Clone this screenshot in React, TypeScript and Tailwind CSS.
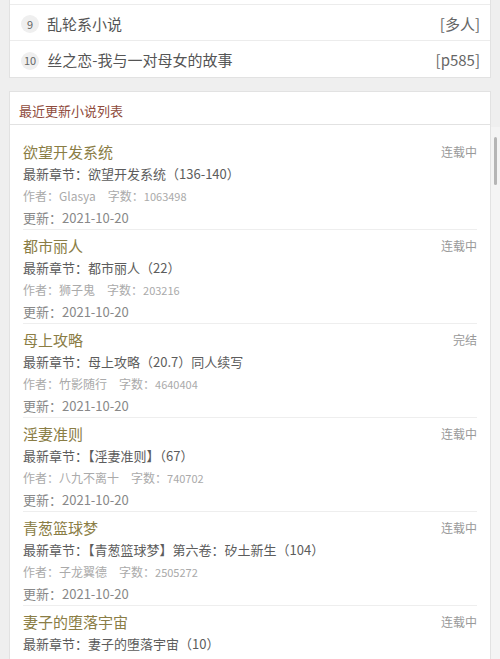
const hot = [
  { rank: 9, title: '乱轮系小说', tag: '[多人]' },
  { rank: 10, title: '丝之恋-我与一对母女的故事', tag: '[p585]' },
];

const novels = [
  { title: '欲望开发系统', chapter: '最新章节：欲望开发系统（136-140）', author: 'Glasya', words: '1063498', status: '连载中' },
  { title: '都市丽人', chapter: '最新章节：都市丽人（22）', author: '狮子鬼', words: '203216', status: '连载中' },
  { title: '母上攻略', chapter: '最新章节：母上攻略（20.7）同人续写', author: '竹影随行', words: '4640404', status: '完结' },
  { title: '淫妻准则', chapter: '最新章节：【淫妻准则】（67）', author: '八九不离十', words: '740702', status: '连载中' },
  { title: '青葱篮球梦', chapter: '最新章节：【青葱篮球梦】第六卷：矽土新生（104）', author: '子龙翼德', words: '2505272', status: '连载中' },
  { title: '妻子的堕落宇宙', chapter: '最新章节：妻子的堕落宇宙（10）', author: '佚名', words: '1180236', status: '连载中' },
];

export default function App() {
  return (
    <div
      className="relative h-[659px] w-[500px] overflow-hidden bg-[#efefef]"
      style={{ fontFamily: '"Noto Sans CJK SC", "Noto Sans", sans-serif' }}
    >
      <div className="ml-[9px] w-[482px] border-x border-b border-[#e2e2e2] bg-white">
        <div className="h-[5px] border-b border-[#ececec]" />
        {hot.map((h, i) => (
          <div
            key={h.rank}
            className={`flex h-[36px] items-center pl-[11px] pr-[10px] pt-[3px] ${i === 0 ? 'border-b border-[#ececec]' : ''}`}
          >
            <span className="flex h-[18px] min-w-[18px] items-center justify-center rounded-full bg-[#efefef] px-[3px] text-[11px] leading-none text-[#666]">
              {h.rank}
            </span>
            <span className="ml-[8px] flex-1 text-[15px] text-[#555]">{h.title}</span>
            <span className="text-[15px] text-[#666]">{h.tag}</span>
          </div>
        ))}
      </div>

      <div className="ml-[9px] mt-[13px] w-[482px] border border-[#e2e2e2] bg-white">
        <div className="flex h-[33px] items-center border-b border-[#e2e2e2] pl-[9px] pt-[5px] text-[13px] text-[#8f4b3c]">
          最近更新小说列表
        </div>
        <div className="px-[13px] pt-[11px]">
          {novels.map((n) => (
            <div key={n.title} className="border-b border-[#eeeeee] pt-[5px]">
              <div className="flex h-[22px] items-center">
                <span className="flex-1 text-[15px] text-[#8a7d45]">{n.title}</span>
                <span className="text-[12px] text-[#999]">{n.status}</span>
              </div>
              <div className="flex h-[22px] items-center text-[13px] text-[#5c5c5c]">{n.chapter}</div>
              <div className="flex h-[22px] items-center text-[12px] text-[#aaa]">
                <span>作者：{n.author}</span>
                <span className="ml-[12px]">字数：</span>
                <span className="text-[11px]">{n.words}</span>
              </div>
              <div className="flex h-[22px] items-center text-[13px] text-[#888]">更新：2021-10-20</div>
            </div>
          ))}
        </div>
      </div>

      <div className="absolute right-0 top-[127px] h-[532px] w-[9px] bg-[#f4f4f4]">
        <div className="ml-[3px] mt-[10px] h-[48px] w-[3px] rounded-full bg-[#b5b5b5]" />
      </div>
    </div>
  );
}
